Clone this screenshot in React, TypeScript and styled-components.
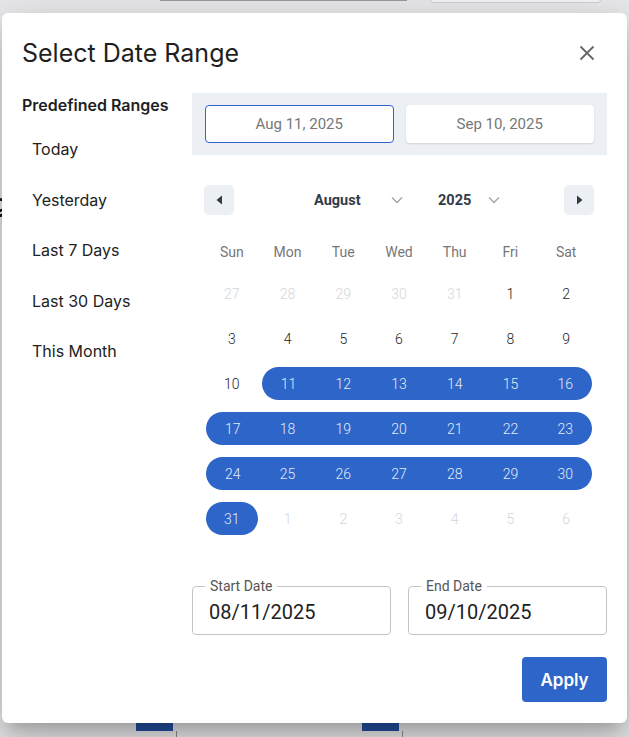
import React from "react";
import styled, { createGlobalStyle } from "styled-components";

const GlobalStyle = createGlobalStyle`
  html, body {
    margin: 0;
    padding: 0;
  }
  body {
    font-family: Inter, "Noto Sans", sans-serif;
    background: #e9e9eb;
  }
  * {
    box-sizing: border-box;
  }
`;

const blue = "#2d65c8";

const Page = styled.div`
  position: relative;
  width: 629px;
  height: 737px;
  overflow: hidden;
  background: #e9e9eb;
  display: flex;
  flex-direction: column;
`;

const TopBar = styled.div`
  display: flex;
  align-items: flex-start;
  padding-left: 160px;
  height: 12px;
`;

const TopRule = styled.div`
  width: 247px;
  height: 1px;
  background: #9a9a9c;
`;

const TopField = styled.div`
  margin-left: 23px;
  margin-top: -6px;
  width: 171px;
  height: 9px;
  background: #f6f6f7;
  border: 1px solid #cfcfd1;
  border-radius: 3px;
`;

const PageSide = styled.div`
  flex: 1;
  display: flex;
  flex-direction: column;
  gap: 20px;
  padding: 140px 0 0 0;
  margin-left: -7px;
  font-family: Roboto, sans-serif;
  color: #555;
`;

const SideBit = styled.div<{ $bold?: boolean }>`
  font-size: ${(p) => (p.$bold ? "26px" : "14px")};
  font-weight: ${(p) => (p.$bold ? 700 : 400)};
  color: ${(p) => (p.$bold ? "#111" : "#888")};
`;

const Chart = styled.div`
  width: 515px;
  height: 15px;
  display: flex;
  flex-direction: column;
`;

const ChartBars = styled.div`
  display: flex;
  align-items: flex-end;
  height: 9px;
  padding-left: 136px;
  gap: 189px;
`;

const ChartBar = styled.div`
  width: 37px;
  height: 9px;
  background: #23509e;
`;

const Baseline = styled.div`
  height: 1px;
  background: #8c8c8e;
`;

const Ticks = styled.div`
  display: flex;
  padding-left: 176px;
  gap: 225px;
  height: 6px;
`;

const Tick = styled.div`
  width: 1px;
  height: 6px;
  background: #8c8c8e;
`;

const Modal = styled.div`
  position: absolute;
  top: 13px;
  left: 2px;
  width: 625px;
  height: 710px;
  background: #fff;
  border-radius: 6px;
  box-shadow: 0 11px 15px -7px rgba(0, 0, 0, 0.2),
    0 24px 38px 3px rgba(0, 0, 0, 0.12), 0 9px 46px 8px rgba(0, 0, 0, 0.1);
  padding: 24px 20px 20px 20px;
  display: flex;
  flex-direction: column;
`;

const Header = styled.div`
  display: flex;
  align-items: center;
  justify-content: space-between;
  height: 32px;
  margin-bottom: 24px;
`;

const Title = styled.h2`
  margin: 0;
  font-family: Inter, sans-serif;
  font-size: 25px;
  font-weight: 400;
  color: #1f1f1f;
  line-height: 32px;
`;

const CloseButton = styled.button`
  width: 40px;
  height: 40px;
  border: none;
  background: transparent;
  display: flex;
  align-items: center;
  justify-content: center;
  padding: 0;
  cursor: pointer;
`;

const Body = styled.div`
  display: flex;
`;

const Sidebar = styled.div`
  width: 170px;
  display: flex;
  flex-direction: column;
`;

const SidebarTitle = styled.div`
  font-family: Inter, sans-serif;
  font-size: 16px;
  font-weight: 600;
  line-height: 24px;
  color: #1f1f1f;
  margin-bottom: 7px;
`;

const RangeItem = styled.div`
  height: 50.5px;
  display: flex;
  align-items: center;
  padding-left: 10px;
  font-family: Inter, sans-serif;
  font-size: 16px;
  color: #222;
`;

const Main = styled.div`
  width: 415px;
  display: flex;
  flex-direction: column;
`;

const RangePanel = styled.div`
  background: #eceff4;
  padding: 12px 13px;
  display: grid;
  grid-template-columns: 1fr 1fr;
  gap: 12px;
`;

const RangeButton = styled.div<{ $active?: boolean }>`
  height: 38px;
  background: #fff;
  border-radius: 4px;
  border: 1px solid ${(p) => (p.$active ? blue : "transparent")};
  box-shadow: ${(p) => (p.$active ? "none" : "0 1px 2px rgba(0,0,0,0.12)")};
  display: flex;
  align-items: center;
  justify-content: center;
  font-family: Roboto, sans-serif;
  font-size: 15px;
  color: #777;
`;

const Calendar = styled.div`
  padding: 0 13px 0 12px;
  margin-top: 30px;
  display: flex;
  flex-direction: column;
`;

const NavRow = styled.div`
  display: flex;
  align-items: center;
  height: 30px;
`;

const NavButton = styled.button`
  width: 30px;
  height: 30px;
  border: none;
  border-radius: 5px;
  background: #eceff4;
  display: flex;
  align-items: center;
  justify-content: center;
  padding: 0;
`;

const Selects = styled.div`
  flex: 1;
  display: flex;
  align-items: center;
  justify-content: center;
  gap: 35px;
  padding-left: 16px;
`;

const SelectLabel = styled.div<{ $width: number }>`
  width: ${(p) => p.$width}px;
  display: flex;
  align-items: center;
  justify-content: space-between;
  font-family: Roboto, sans-serif;
  font-size: 14.5px;
  font-weight: 700;
  color: #333b48;
`;

const Grid = styled.div`
  display: grid;
  grid-template-columns: repeat(7, 1fr);
`;

const WeekDay = styled.div`
  height: 38px;
  margin-top: 18px;
  display: flex;
  align-items: center;
  justify-content: center;
  font-family: Roboto, sans-serif;
  font-size: 14px;
  color: #777;
`;

const DayCell = styled.div`
  height: 45px;
  display: flex;
  align-items: center;
`;

const DayPill = styled.div<{
  $inRange: boolean;
  $start: boolean;
  $end: boolean;
  $muted: boolean;
}>`
  flex: 1;
  height: 33px;
  display: flex;
  align-items: center;
  justify-content: center;
  font-family: Roboto, sans-serif;
  font-size: 14px;
  font-weight: 300;
  margin-left: ${(p) => (p.$start ? "2px" : "0")};
  margin-right: ${(p) => (p.$end ? "2px" : "0")};
  background: ${(p) => (p.$inRange ? blue : "transparent")};
  border-radius: ${(p) =>
    `${p.$start ? "17px" : "0"} ${p.$end ? "17px" : "0"} ${
      p.$end ? "17px" : "0"
    } ${p.$start ? "17px" : "0"}`};
  color: ${(p) => (p.$inRange ? "#e4ebf7" : p.$muted ? "#d3d6dc" : "#222")};
`;

const Fields = styled.div`
  display: grid;
  grid-template-columns: 1fr 1fr;
  gap: 17px;
  margin-top: 45px;
`;

const Field = styled.div`
  position: relative;
  height: 49px;
  border: 1px solid #c4c4c4;
  border-radius: 4px;
  display: flex;
  align-items: center;
  padding: 2px 16px 0 16px;
  font-family: Roboto, sans-serif;
  font-size: 20px;
  color: #222;
`;

const FieldLabel = styled.span`
  position: absolute;
  top: -10px;
  left: 12px;
  padding: 0 5px;
  background: #fff;
  font-family: Roboto, sans-serif;
  font-size: 14px;
  line-height: 18px;
  color: #555;
`;

const Footer = styled.div`
  display: flex;
  justify-content: flex-end;
  margin-top: 22px;
`;

const ApplyButton = styled.button`
  width: 85px;
  height: 45px;
  border: none;
  border-radius: 4px;
  background: ${blue};
  color: #fff;
  font-family: Inter, sans-serif;
  font-size: 17px;
  font-weight: 600;
`;

const Chevron = () => (
  <svg width="12" height="8" viewBox="0 0 12 8">
    <path d="M1 1.5 L6 6.5 L11 1.5" fill="none" stroke="#a3a7ad" strokeWidth="1.4" />
  </svg>
);

const ranges = ["Today", "Yesterday", "Last 7 Days", "Last 30 Days", "This Month"];
const weekdays = ["Sun", "Mon", "Tue", "Wed", "Thu", "Fri", "Sat"];

type Day = { n: number; muted: boolean; inRange: boolean };

function buildWeeks(): Day[][] {
  const days: Day[] = [];
  [27, 28, 29, 30, 31].forEach((n) => days.push({ n, muted: true, inRange: false }));
  for (let n = 1; n <= 31; n++) days.push({ n, muted: false, inRange: n >= 11 });
  for (let n = 1; n <= 6; n++) days.push({ n, muted: true, inRange: false });
  const weeks: Day[][] = [];
  for (let i = 0; i < days.length; i += 7) weeks.push(days.slice(i, i + 7));
  return weeks;
}

export default function App() {
  const weeks = buildWeeks();
  return (
    <>
      <GlobalStyle />
      <Page>
        <TopBar>
          <TopRule />
          <TopField />
        </TopBar>
        <PageSide>
          <SideBit>i</SideBit>
          <SideBit $bold>g</SideBit>
          <SideBit>c</SideBit>
        </PageSide>
        <Chart>
          <ChartBars>
            <ChartBar />
            <ChartBar />
          </ChartBars>
          <Baseline />
          <Ticks>
            <Tick />
            <Tick />
          </Ticks>
        </Chart>

        <Modal>
          <Header>
            <Title>Select Date Range</Title>
            <CloseButton aria-label="close">
              <svg width="16" height="16" viewBox="0 0 16 16">
                <path d="M1.5 1.5 L14.5 14.5 M14.5 1.5 L1.5 14.5" stroke="#666" strokeWidth="1.8" />
              </svg>
            </CloseButton>
          </Header>
          <Body>
            <Sidebar>
              <SidebarTitle>Predefined Ranges</SidebarTitle>
              {ranges.map((r) => (
                <RangeItem key={r}>{r}</RangeItem>
              ))}
            </Sidebar>
            <Main>
              <RangePanel>
                <RangeButton $active>Aug 11, 2025</RangeButton>
                <RangeButton>Sep 10, 2025</RangeButton>
              </RangePanel>
              <Calendar>
                <NavRow>
                  <NavButton aria-label="previous month">
                    <svg width="7" height="10" viewBox="0 0 7 10">
                      <path d="M6 0.5 L0.5 5 L6 9.5 Z" fill="#2f3744" />
                    </svg>
                  </NavButton>
                  <Selects>
                    <SelectLabel $width={89}>
                      August
                      <Chevron />
                    </SelectLabel>
                    <SelectLabel $width={62}>
                      2025
                      <Chevron />
                    </SelectLabel>
                  </Selects>
                  <NavButton aria-label="next month">
                    <svg width="7" height="10" viewBox="0 0 7 10">
                      <path d="M1 0.5 L6.5 5 L1 9.5 Z" fill="#2f3744" />
                    </svg>
                  </NavButton>
                </NavRow>
                <Grid>
                  {weekdays.map((w) => (
                    <WeekDay key={w}>{w}</WeekDay>
                  ))}
                  {weeks.map((week, wi) =>
                    week.map((d, di) => {
                      const prev = week[di - 1];
                      const next = week[di + 1];
                      const start = d.inRange && (!prev || !prev.inRange);
                      const end = d.inRange && (!next || !next.inRange);
                      return (
                        <DayCell key={`${wi}-${di}`}>
                          <DayPill
                            $inRange={d.inRange}
                            $start={start}
                            $end={end}
                            $muted={d.muted}
                          >
                            {d.n}
                          </DayPill>
                        </DayCell>
                      );
                    })
                  )}
                </Grid>
              </Calendar>
              <Fields>
                <Field>
                  <FieldLabel>Start Date</FieldLabel>
                  08/11/2025
                </Field>
                <Field>
                  <FieldLabel>End Date</FieldLabel>
                  09/10/2025
                </Field>
              </Fields>
              <Footer>
                <ApplyButton>Apply</ApplyButton>
              </Footer>
            </Main>
          </Body>
        </Modal>
      </Page>
    </>
  );
}
